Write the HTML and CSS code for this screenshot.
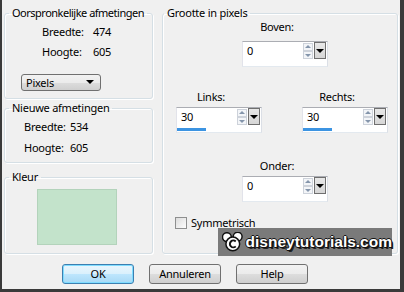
FILE: index.html
```html
<!DOCTYPE html>
<html lang="nl">
<head>
  <meta charset="UTF-8">
  <title>Grootte van doek</title>
  <link rel="stylesheet" href="styles.css">
</head>
<body>
<div class="panels">
  <div class="col-left">
    <fieldset class="group group-orig">
      <legend class="legend-tight">Oorspronkelijke afmetingen</legend>
      <div class="dims dims-orig">
        <span>Breedte:</span><span>474</span>
        <span>Hoogte:</span><span>605</span>
      </div>
      <div class="select">Pixels<span class="select-arrow"></span></div>
    </fieldset>

    <fieldset class="group group-new">
      <legend>Nieuwe afmetingen</legend>
      <div class="dims dims-new">
        <span>Breedte:</span><span>534</span>
        <span>Hoogte:</span><span>605</span>
      </div>
    </fieldset>

    <fieldset class="group group-color">
      <legend>Kleur</legend>
      <div class="swatch"></div>
    </fieldset>
  </div>

  <fieldset class="group group-size">
    <legend>Grootte in pixels</legend>
    <div class="size-body">
      <div class="field field-top">
        <div class="field-label">Boven:</div>
        <div class="spin">
          <div class="spin-row">
            <span class="spin-value">0</span>
            <span class="spin-arrows"><span class="arrow-up"></span><span class="arrow-down"></span></span>
            <span class="spin-drop"></span>
          </div>
        </div>
      </div>

      <div class="field-pair">
        <div class="field">
          <div class="field-label field-label-near">Links:</div>
          <div class="spin">
            <div class="spin-row">
              <span class="spin-value">30</span>
              <span class="spin-arrows"><span class="arrow-up"></span><span class="arrow-down"></span></span>
              <span class="spin-drop"></span>
            </div>
            <div class="spin-bar"></div>
          </div>
        </div>
        <div class="field">
          <div class="field-label field-label-near">Rechts:</div>
          <div class="spin">
            <div class="spin-row">
              <span class="spin-value">30</span>
              <span class="spin-arrows"><span class="arrow-up"></span><span class="arrow-down"></span></span>
              <span class="spin-drop"></span>
            </div>
            <div class="spin-bar"></div>
          </div>
        </div>
      </div>

      <div class="field field-bottom">
        <div class="field-label field-label-near">Onder:</div>
        <div class="spin">
          <div class="spin-row">
            <span class="spin-value">0</span>
            <span class="spin-arrows"><span class="arrow-up"></span><span class="arrow-down"></span></span>
            <span class="spin-drop"></span>
          </div>
        </div>
      </div>

      <label class="check">
        <span class="check-box"></span>
        <span>Symmetrisch</span>
      </label>
    </div>
  </fieldset>
</div>

<div class="buttons">
  <button class="btn btn-default">OK</button>
  <button class="btn">Annuleren</button>
  <button class="btn">Help</button>
</div>

<!-- watermark on top of the dialog -->
<div class="watermark">
  <svg class="watermark-logo" width="22" height="20" viewBox="0 0 22 20">
    <circle cx="5" cy="5" r="4.5" fill="#fff" stroke="#111" stroke-width="1.5"/>
    <circle cx="16" cy="4.5" r="4.5" fill="#fff" stroke="#111" stroke-width="1.5"/>
    <circle cx="11" cy="12" r="7" fill="#fff" stroke="#111" stroke-width="1.5"/>
    <path d="M14 9.5 A3.5 3.5 0 1 0 14 14.5" fill="none" stroke="#111" stroke-width="2"/>
  </svg>
  <span class="watermark-text">disneytutorials.com</span>
</div>
</body>
</html>
```

FILE: styles.css
```css
body {
  margin: 0;
  width: 404px;
  height: 292px;
  box-sizing: border-box;
  position: relative;
  overflow: hidden;
  background: #f0f0f0;
  border-left: 2px solid #3a3a3a;
  border-right: 4px solid #3a3a3a;
  border-bottom: 3px solid #3a3a3a;
  font-family: "Noto Sans", sans-serif;
  font-size: 11px;
  letter-spacing: -0.25px;
  line-height: 14px;
  color: #000;
}
.panels {
  display: grid;
  grid-template-columns: 149px 236px;
  column-gap: 9px;
  padding: 6px 0 0 2px;
}
.col-left {
  display: flex;
  flex-direction: column;
}
.group {
  margin: 0;
  padding: 0;
  min-width: 0;
  box-sizing: border-box;
  border: 1px solid #d5dfe5;
  border-radius: 3px;
  box-shadow: inset 1px 1px 0 #fff, 1px 1px 0 #fff;
}
.group legend {
  margin-left: 4px;
  padding: 0 3px;
  line-height: 14px;
  white-space: nowrap;
}
.group legend.legend-tight {
  letter-spacing: -0.5px;
}
.group-orig {
  height: 93px;
}
.group-new {
  height: 62px;
  margin-top: 2px;
}
.group-color {
  height: 84px;
  margin-top: 7px;
}
.group-size {
  height: 248px;
}
.group-size legend {
  margin-left: 1px;
}
.size-body {
  padding-left: 13px;
}

/* dimensions */
.dims {
  display: grid;
  margin-top: 5px;
}
.dims-orig {
  grid-template-columns: 51px auto;
  row-gap: 6px;
  padding-left: 37px;
}
.dims-new {
  grid-template-columns: 46px auto;
  row-gap: 7px;
  padding-left: 19px;
}
.select {
  position: relative;
  width: 80px;
  height: 17px;
  box-sizing: border-box;
  margin: 15px 0 0 16px;
  padding-left: 4px;
  line-height: 15px;
  border: 1px solid #707070;
  border-radius: 3px;
  background: linear-gradient(#f2f2f2 0%, #ebebeb 50%, #dddddd 50%, #cfcfcf 100%);
}
.select-arrow {
  position: absolute;
  right: 6px;
  top: 5px;
  border-left: 4px solid transparent;
  border-right: 4px solid transparent;
  border-top: 4px solid #000;
}
.swatch {
  width: 80px;
  height: 56px;
  box-sizing: border-box;
  margin: 5px 0 0 32px;
  background: #c3e3cb;
  border: 1px solid #b3d3bb;
}

/* spin boxes */
.field-top {
  margin-left: 66px;
}
.field-label {
  width: 70px;
  text-align: center;
}
.field-top .spin {
  margin-top: 7px;
}
.field-label-near + .spin {
  margin-top: 3px;
}
.field-pair {
  display: flex;
  gap: 40px;
  margin-top: 23px;
}
.field-bottom {
  margin: 26px 0 0 66px;
}
.spin {
  width: 86px;
  height: 26px;
  box-sizing: border-box;
  background: #fff;
  border: 1px solid;
  border-color: #abadb3 #dbdfe6 #e3e9ef #e2e3ea;
}
.spin-row {
  display: flex;
  height: 18px;
}
.spin-value {
  flex: 1;
  padding: 2px 0 0 4px;
}
.spin-arrows {
  display: flex;
  flex-direction: column;
  width: 10px;
  margin: 1px 1px 0 0;
}
.arrow-up,
.arrow-down {
  position: relative;
  height: 8px;
  box-sizing: border-box;
  border: 1px solid #cdd2da;
  background: #f3f5f8;
}
.arrow-up::after,
.arrow-down::after {
  content: "";
  position: absolute;
  left: 1px;
  border-left: 3px solid transparent;
  border-right: 3px solid transparent;
}
.arrow-up::after {
  top: 1px;
  border-bottom: 3px solid #8495ab;
}
.arrow-down::after {
  top: 2px;
  border-top: 3px solid #8495ab;
}
.spin-drop {
  position: relative;
  width: 12px;
  height: 17px;
  box-sizing: border-box;
  margin-right: 1px;
  border: 1px solid #6f6f6f;
  background: linear-gradient(#e8e8e8, #d6d6d6);
}
.spin-drop::after {
  content: "";
  position: absolute;
  left: 1px;
  top: 6px;
  border-left: 4px solid transparent;
  border-right: 4px solid transparent;
  border-top: 4px solid #000;
}
.spin-bar {
  width: 29px;
  height: 3px;
  margin-top: 2px;
  background: #3c94e2;
}

/* checkbox */
.check {
  display: flex;
  align-items: center;
  gap: 4px;
  margin: 14px 0 0 -1px;
}
.check-box {
  width: 12px;
  height: 12px;
  box-sizing: border-box;
  border: 1px solid #8e8f8f;
  background: linear-gradient(135deg, #dcdcdc, #fdfdfd);
}

/* buttons */
.buttons {
  display: flex;
  gap: 15px;
  padding: 10px 0 0 60px;
}
.btn {
  width: 72px;
  height: 20px;
  padding: 0;
  box-sizing: border-box;
  font: inherit;
  letter-spacing: inherit;
  color: #000;
  border: 1px solid #707070;
  border-radius: 3px;
  background: linear-gradient(#f2f2f2 0%, #ebebeb 50%, #dddddd 50%, #cfcfcf 100%);
}
.btn-default {
  border-color: #3c7fb1;
  box-shadow: inset 0 0 0 1px #7fdcff;
  background: linear-gradient(#eaf6fd 0%, #d9f0fc 50%, #bee6fd 50%, #a7d9f5 100%);
}

/* watermark */
.watermark {
  position: absolute;
  left: 216px;
  top: 228px;
  width: 174px;
  height: 28px;
  display: flex;
  align-items: center;
  gap: 2px;
  padding-left: 4px;
  box-sizing: border-box;
  background: #7a7a7a;
}
.watermark-text {
  font-family: "Liberation Sans", sans-serif;
  font-weight: bold;
  font-size: 15.5px;
  letter-spacing: 0;
  color: #fff;
  text-shadow: -1px 0 #111, 1px 0 #111, 0 -1px #111, 0 1px #111, 1px 1px #111, 2px 2px #222;
}
```
